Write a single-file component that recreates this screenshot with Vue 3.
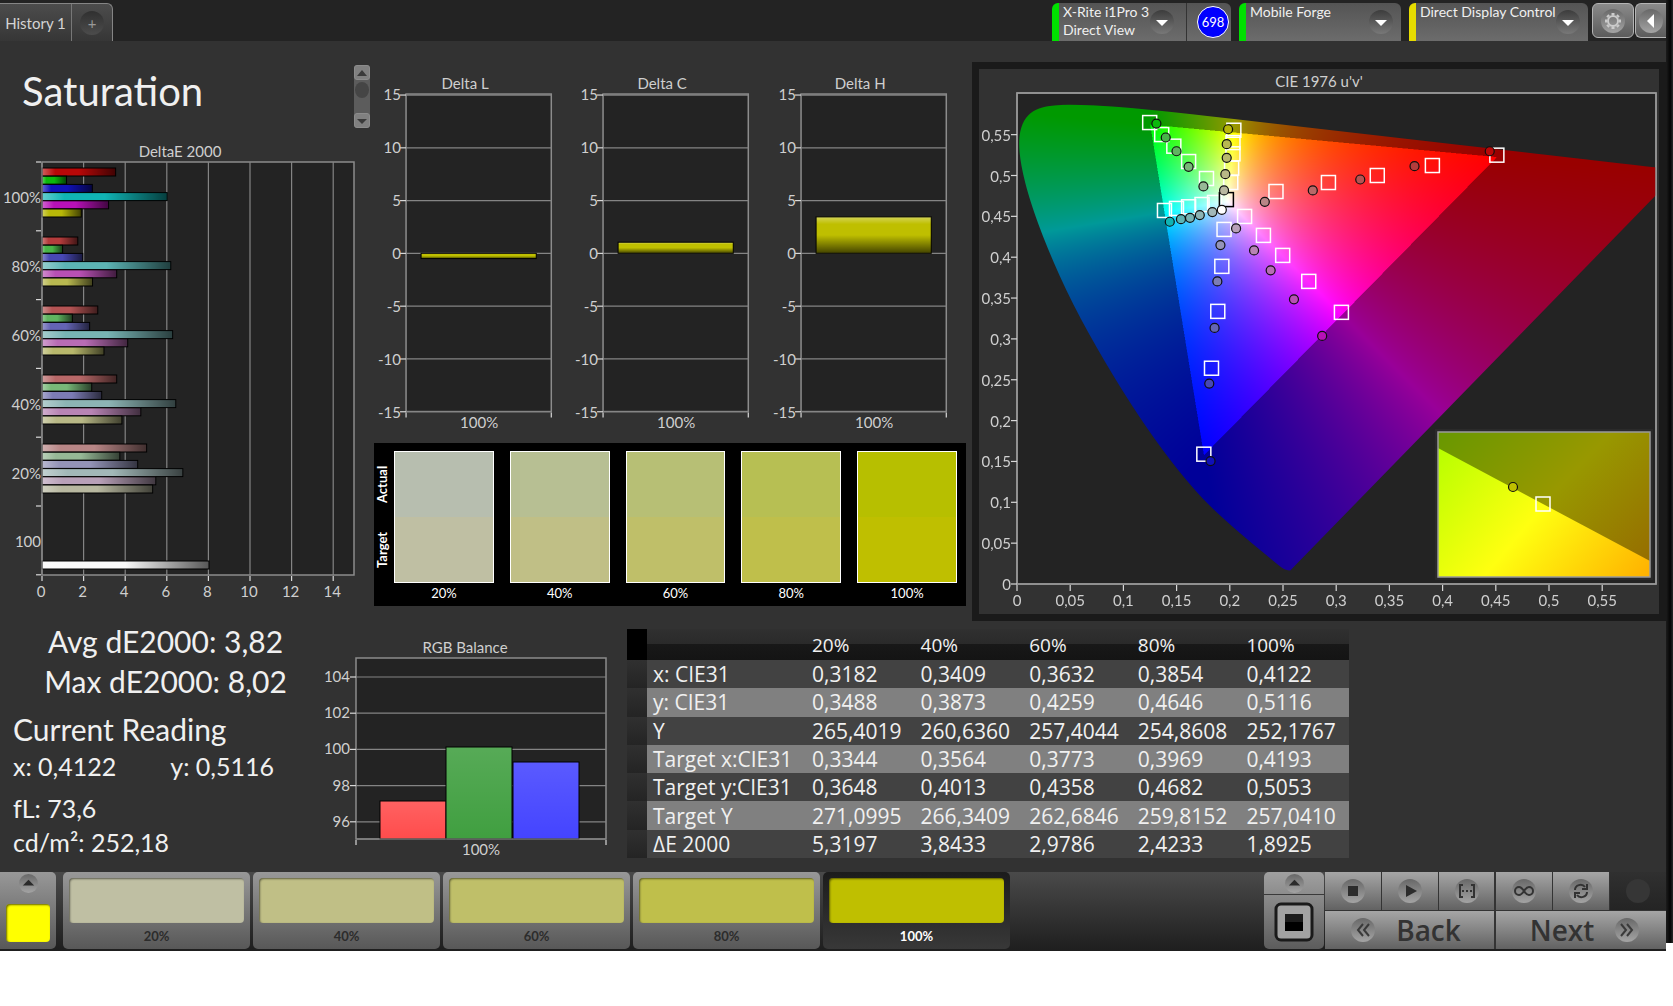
<template>
  <div class="page">
    <div class="app">
      <!-- Top bar: history tabs and connected devices -->
      <header class="topbar">
        <nav class="tabs">
          <button class="tab">History 1</button>
          <button class="tab tab-add" aria-label="Add history">
            <span class="round dark">+</span>
          </button>
        </nav>
        <div class="devices">
          <div v-for="device in devices" :key="device.name" class="device" :class="device.status">
            <button class="device-main" :style="{ width: device.width + 'px' }" aria-haspopup="menu">
              <span class="device-text">
                <span>{{ device.name }}</span>
                <span v-if="device.mode">{{ device.mode }}</span>
              </span>
              <svg class="drop" viewBox="0 0 24 24" aria-hidden="true">
                <circle cx="12" cy="12" r="12" fill="url(#knobDark)" />
                <path d="M6 10h12l-6 6z" fill="#fff" />
              </svg>
            </button>
            <div v-if="device.badge" class="device-badge">
              <span class="badge">{{ device.badge }}</span>
            </div>
          </div>
          <button class="tool" aria-label="Settings">
            <svg viewBox="0 0 24 24" aria-hidden="true">
              <circle cx="12" cy="12" r="12" fill="url(#knob)" />
              <g stroke="#ccc" fill="none">
                <circle cx="12" cy="12" r="5" stroke-width="2" />
                <path v-for="n in 8" :key="n" d="M12 6V4" stroke-width="3" :transform="`rotate(${n * 45} 12 12)`" />
              </g>
            </svg>
          </button>
          <button class="tool tool-last" aria-label="Collapse panel">
            <svg viewBox="0 0 24 24" aria-hidden="true">
              <circle cx="12" cy="12" r="12" fill="url(#knob)" />
              <path d="M15 5v14l-7-7z" fill="#fff" />
            </svg>
          </button>
        </div>
      </header>

      <!-- Shared gradients -->
      <svg class="defs" width="0" height="0" aria-hidden="true">
        <defs>
          <linearGradient id="knob" x1="0" y1="0" x2="0" y2="1">
            <stop offset="0" stop-color="#686868" />
            <stop offset="1" stop-color="#a4a4a4" />
          </linearGradient>
          <linearGradient id="knobDark" x1="0" y1="0" x2="0" y2="1">
            <stop offset="0" stop-color="#3c3c3c" />
            <stop offset="1" stop-color="#787878" />
          </linearGradient>
          <linearGradient id="shadeX">
            <stop offset="0" stop-color="#fff" stop-opacity="0.35" />
            <stop offset="0.18" stop-color="#fff" stop-opacity="0" />
            <stop offset="0.5" stop-color="#000" stop-opacity="0" />
            <stop offset="1" stop-color="#000" stop-opacity="0.65" />
          </linearGradient>
          <linearGradient id="shadeY" x1="0" y1="0" x2="0" y2="1">
            <stop offset="0" stop-color="#fff" stop-opacity="0.35" />
            <stop offset="0.2" stop-color="#fff" stop-opacity="0" />
            <stop offset="0.5" stop-color="#000" stop-opacity="0" />
            <stop offset="1" stop-color="#000" stop-opacity="0.65" />
          </linearGradient>
          <linearGradient id="shadeSoft" x1="0" y1="0" x2="0" y2="1">
            <stop offset="0" stop-color="#fff" stop-opacity="0.12" />
            <stop offset="1" stop-color="#fff" stop-opacity="0" />
          </linearGradient>
        </defs>
      </svg>

      <main>
        <section class="upper">
          <div class="col-left">
            <div class="title-row">
              <h1>Saturation</h1>
              <div class="scroller">
                <button aria-label="Scroll up"><svg viewBox="0 0 12 12"><path d="M1 9h10L6 3z" /></svg></button>
                <span class="thumb"></span>
                <button aria-label="Scroll down"><svg viewBox="0 0 12 12"><path d="M1 4h10L6 9z" /></svg></button>
              </div>
            </div>

            <svg class="chart" viewBox="0 0 370 474" role="img" aria-label="DeltaE 2000">
              <text x="180" y="21" class="mid">DeltaE 2000</text>
              <rect x="42" y="26" width="312" height="413" class="plot" />
              <g v-for="n in 7" :key="n">
                <path :d="`M${42 + n * 41.6} 26V439`" class="grid" />
              </g>
              <g v-for="n in 8" :key="'x' + n">
                <path :d="`M${42 + (n - 1) * 41.6} 440v5`" class="tick" />
                <text :x="41 + (n - 1) * 41.6" y="461" class="mid">{{ (n - 1) * 2 }}</text>
              </g>
              <path v-for="n in 7" :key="'y' + n" :d="`M36 ${26 + (n - 1) * 68.8}h5`" class="tick" />
              <g v-for="(group, g) in deltaE" :key="group.label">
                <text x="41" :y="67 + g * 69" class="end">{{ group.label }}</text>
                <g v-for="(value, i) in group.values" :key="i">
                  <rect x="42" :y="32 + g * 69 + i * 8.2" :width="value * 20.8" height="8" :fill="group.colors[i]" />
                  <rect x="42" :y="32 + g * 69 + i * 8.2" :width="value * 20.8" height="8" fill="url(#shadeX)" class="bar" />
                </g>
              </g>
              <text x="41" y="411" class="end">100</text>
              <rect x="42" y="425" width="167" height="8" fill="#f8f8f8" />
              <rect x="42" y="425" width="167" height="8" fill="url(#shadeX)" class="bar" />
              <path d="M42 26V439" class="axis" />
            </svg>
          </div>

          <div class="col-mid">
            <div class="deltas">
              <svg v-for="chart in deltas" :key="chart.title" class="chart" viewBox="0 0 197 365" role="img" :aria-label="chart.title">
                <text x="91" y="19" class="mid">{{ chart.title }}</text>
                <rect x="32" y="24" width="145" height="317" class="plot" />
                <g v-for="(tick, i) in [15, 10, 5, 0, -5, -10, -15]" :key="tick">
                  <path :d="`M32 ${25 + i * 52.7}h145`" class="grid" />
                  <path :d="`M26 ${25 + i * 52.7}h6`" class="tick" />
                  <text x="27" :y="30 + i * 52.9" class="end">{{ tick }}</text>
                </g>
                <path d="M32 342v5M177 342v5" class="tick" />
                <rect x="47" :y="barTop(chart.value)" width="115" :height="Math.abs(chart.value) * 10.54" fill="#bfbf00" />
                <rect x="47" :y="barTop(chart.value)" width="115" :height="Math.abs(chart.value) * 10.54" fill="url(#shadeY)" class="bar" />
                <text x="105" y="357" class="mid">100%</text>
              </svg>
            </div>

            <div class="compare">
              <div class="compare-side">
                <span>Actual</span>
                <span>Target</span>
              </div>
              <figure v-for="patch in patches" :key="patch.label">
                <div class="compare-box">
                  <div :style="{ background: patch.actual }"></div>
                  <div :style="{ background: patch.target }"></div>
                </div>
                <figcaption>{{ patch.label }}</figcaption>
              </figure>
            </div>
          </div>

          <div class="cie">
            <svg class="chart" viewBox="0 0 680 545" role="img" aria-label="CIE 1976 u'v'">
              <text x="340" y="18" class="mid">CIE 1976 u'v'</text>
              <rect x="38" y="24" width="639" height="491" class="plot" />
              <foreignObject x="38" y="24" width="639" height="491">
                <canvas ref="gamut" class="gamut" width="1278" height="982"></canvas>
              </foreignObject>
              <rect x="38" y="24" width="639" height="491" class="frame" />
              <g v-for="n in 12" :key="n">
                <path :d="`M${px((n - 1) * 0.05)} 516v6`" class="tick" />
                <text :x="px((n - 1) * 0.05)" y="537" class="mid">{{ comma((n - 1) * 0.05) }}</text>
                <path :d="`M32 ${py((n - 1) * 0.05)}h6`" class="tick" />
                <text x="32" :y="py((n - 1) * 0.05) + 6" class="end">{{ comma((n - 1) * 0.05) }}</text>
              </g>

              <g v-for="(set, s) in targets" :key="'t' + s">
                <rect v-for="(p, i) in set" :key="i" :x="px(p[0]) - 7" :y="py(p[1]) - 7" width="14" height="14" class="target" />
              </g>
              <rect :x="px(0.1968) - 7" :y="py(0.4705) - 7" width="14" height="14" class="target white-point" />
              <g v-for="(set, s) in actuals" :key="'a' + s">
                <circle v-for="(p, i) in set" :key="i" :cx="px(p[0])" :cy="py(p[1])" r="4.5" :fill="palette[i][s]" class="actual" />
              </g>
              <circle :cx="px(0.1925)" :cy="py(0.458)" r="4.5" fill="#fff" class="actual" />

              <!-- Magnified view around the current patch -->
              <defs>
                <linearGradient id="insetIn" gradientUnits="userSpaceOnUse" x1="477" y1="360" x2="662" y2="518">
                  <stop offset="0" stop-color="#b8ff00" />
                  <stop offset="0.48" stop-color="#ffff10" />
                  <stop offset="1" stop-color="#ffb000" />
                </linearGradient>
                <linearGradient id="insetOut" gradientUnits="userSpaceOnUse" x1="474" y1="349" x2="648" y2="514">
                  <stop offset="0" stop-color="#689800" />
                  <stop offset="0.52" stop-color="#989800" />
                  <stop offset="1" stop-color="#966e00" />
                </linearGradient>
              </defs>
              <rect x="456" y="360" width="218" height="151" fill="#2a2a2a" />
              <rect x="459" y="363" width="212" height="145" fill="url(#insetOut)" />
              <path d="M459 379L671 492V508H459z" fill="url(#insetIn)" />
              <rect x="459" y="363" width="212" height="145" class="frame" />
              <rect x="557" y="428" width="14" height="14" class="target" />
              <circle cx="534" cy="418" r="4.5" fill="#bfbf00" class="actual" />
            </svg>
          </div>
        </section>

        <section class="lower">
          <div class="stats">
            <p class="big center">Avg dE2000: 3,82</p>
            <p class="big center">Max dE2000: 8,02</p>
            <h2 class="big">Current Reading</h2>
            <p class="reading"><span>x: 0,4122</span><span>y: 0,5116</span></p>
            <p class="reading spaced">fL: 73,6</p>
            <p class="reading">cd/m²: 252,18</p>
          </div>

          <svg class="chart rgb" viewBox="0 0 307 230" role="img" aria-label="RGB Balance">
            <text x="145" y="18" class="mid">RGB Balance</text>
            <rect x="36" y="23" width="250" height="181" class="plot" />
            <g v-for="n in 5" :key="n">
              <path :d="`M36 ${42 + (n - 1) * 36.2}h250`" class="grid" />
              <path :d="`M30 ${42 + (n - 1) * 36.2}h6`" class="tick" />
              <text x="30" :y="47 + (n - 1) * 36.2" class="end">{{ 106 - n * 2 }}</text>
            </g>
            <g v-for="bar in balance" :key="bar.color">
              <rect :x="bar.x" :y="bar.y" width="66" :height="204 - bar.y" :fill="bar.color" />
              <rect :x="bar.x" :y="bar.y" width="66" :height="204 - bar.y" fill="url(#shadeSoft)" class="bar" />
            </g>
            <path d="M36 204h250" class="axis" />
            <path d="M36 205v5M286 205v5" class="tick" />
            <text x="161" y="220" class="mid">100%</text>
          </svg>

          <table>
            <thead>
              <tr>
                <th class="handle"></th>
                <th class="name"></th>
                <th v-for="patch in patches" :key="patch.label" scope="col">{{ patch.label }}</th>
              </tr>
            </thead>
            <tbody>
              <tr v-for="row in rows" :key="row[0]">
                <td class="handle"></td>
                <td v-for="(cell, i) in row" :key="i">{{ cell }}</td>
              </tr>
            </tbody>
          </table>
        </section>
      </main>

      <!-- Patch strip and measurement controls -->
      <footer class="bottombar">
        <button class="current" aria-label="Current patch">
          <svg viewBox="0 0 20 20"><circle cx="10" cy="10" r="10" fill="url(#knob)" /><path d="M4 12h12l-6-6z" fill="#2a2a2a" /></svg>
          <span class="current-color"></span>
        </button>
        <div class="strip">
          <button v-for="patch in patches" :key="patch.label" class="patch" :class="{ active: patch.label === selected }" @click="selected = patch.label">
            <span class="patch-color" :style="{ background: patch.target }"></span>
            <span class="patch-label">{{ patch.label }}</span>
          </button>
        </div>
        <div class="window-box">
          <button class="box-up" aria-label="Show patterns">
            <svg viewBox="0 0 20 20"><circle cx="10" cy="10" r="10" fill="url(#knob)" /><path d="M4 12h12l-6-6z" fill="#2a2a2a" /></svg>
          </button>
          <button class="box-main" aria-label="Pattern window">
            <svg viewBox="0 0 40 40">
              <rect x="2" y="2" width="36" height="36" rx="5" fill="#a2a2a2" stroke="#1a1a1a" stroke-width="3" />
              <rect x="11" y="12" width="18" height="17" fill="#000" />
              <path d="M11 12h18v8H11z" fill="#1c1c1c" />
            </svg>
          </button>
        </div>
        <div class="controls">
          <button v-for="icon in icons" :key="icon.name" class="control" :class="{ split: icon.name === 'Range' }" :aria-label="icon.name">
            <svg viewBox="0 0 26 26">
              <circle cx="13" cy="13" r="12" fill="url(#knob)" />
              <path :d="icon.path" :fill="icon.fill ? '#2c2c2c' : 'none'" :stroke="icon.fill ? 'none' : '#333'" stroke-width="2" />
            </svg>
          </button>
          <button class="control off" disabled aria-label="Record">
            <svg viewBox="0 0 26 26"><circle cx="13" cy="13" r="12" fill="#363636" /></svg>
          </button>
          <button class="step back split">
            <svg viewBox="0 0 26 26">
              <circle cx="13" cy="13" r="12" fill="url(#knob)" />
              <path d="M13 7l-5 6 5 6M19 7l-5 6 5 6" fill="none" stroke="#3a3a3a" stroke-width="2" />
            </svg>
            <span>Back</span>
          </button>
          <button class="step next">
            <span>Next</span>
            <svg viewBox="0 0 26 26">
              <circle cx="13" cy="13" r="12" fill="url(#knob)" />
              <path d="M7 7l5 6-5 6M13 7l5 6-5 6" fill="none" stroke="#3a3a3a" stroke-width="2" />
            </svg>
          </button>
        </div>
      </footer>
    </div>
    <div class="edge"></div>
  </div>
</template>

<script setup>
import { ref, onMounted } from 'vue'

const selected = ref('100%')
const gamut = ref(null)

const devices = [
  { name: 'X-Rite i1Pro 3', mode: 'Direct View', status: 'ok', badge: '698', width: 127 },
  { name: 'Mobile Forge', status: 'ok', width: 155 },
  { name: 'Direct Display Control', status: 'warn', width: 172 }
]

const patches = [
  { label: '20%', actual: '#b7beaf', target: '#bfbfa3' },
  { label: '40%', actual: '#b7bf93', target: '#c0bf86' },
  { label: '60%', actual: '#b7bf75', target: '#bfbf69' },
  { label: '80%', actual: '#b7bf53', target: '#bfbf4b' },
  { label: '100%', actual: '#b7bf00', target: '#bfbf00' }
]

// red, green, blue, cyan, magenta, yellow for 100% down to 20%
const palette = [
  ['#b80808', '#0cb80c', '#1010b8', '#10b4b4', '#b810b8', '#b8b808'],
  ['#b43c3c', '#48b448', '#4848b4', '#5cb4b4', '#b850b4', '#b8b850'],
  ['#b45454', '#60b460', '#6464b4', '#78b4b4', '#b86cb4', '#b8b86c'],
  ['#b86868', '#78b878', '#7c7cb4', '#8cb4b4', '#b884b4', '#b8b886'],
  ['#b88686', '#96b896', '#9494b8', '#a2b8b8', '#b8a0b8', '#b8b8a0']
]

const deltaE = [
  { label: '100%', values: [3.54, 1.18, 2.42, 6.02, 3.2, 1.89] },
  { label: '80%', values: [1.72, 0.99, 1.96, 6.19, 3.59, 2.43] },
  { label: '60%', values: [2.68, 1.46, 2.29, 6.28, 4.12, 2.98] },
  { label: '40%', values: [3.59, 2.39, 2.87, 6.43, 4.75, 3.84] },
  { label: '20%', values: [5.03, 3.74, 4.6, 6.77, 5.47, 5.32] }
].map((group, i) => ({ ...group, colors: palette[i] }))

const deltas = [
  { title: 'Delta L', value: -0.5 },
  { title: 'Delta C', value: 1.05 },
  { title: 'Delta H', value: 3.45 }
]

const balance = [
  { color: '#ff4c4c', x: 60, y: 166 },
  { color: '#409f40', x: 126, y: 112 },
  { color: '#4444ff', x: 193, y: 127 }
]

const rows = [
  ['x: CIE31', '0,3182', '0,3409', '0,3632', '0,3854', '0,4122'],
  ['y: CIE31', '0,3488', '0,3873', '0,4259', '0,4646', '0,5116'],
  ['Y', '265,4019', '260,6360', '257,4044', '254,8608', '252,1767'],
  ['Target x:CIE31', '0,3344', '0,3564', '0,3773', '0,3969', '0,4193'],
  ['Target y:CIE31', '0,3648', '0,4013', '0,4358', '0,4682', '0,5053'],
  ['Target Y', '271,0995', '266,3409', '262,6846', '259,8152', '257,0410'],
  ['ΔE 2000', '5,3197', '3,8433', '2,9786', '2,4233', '1,8925']
]

// u'v' coordinates, same colour order as the palette, 100% first
const targets = [
  [[0.451, 0.5249], [0.3904, 0.5122], [0.3386, 0.5], [0.2927, 0.4914], [0.2434, 0.4804]],
  [[0.1247, 0.5648], [0.136, 0.5501], [0.1474, 0.5359], [0.1613, 0.5171], [0.1781, 0.4963]],
  [[0.1756, 0.1589], [0.1828, 0.2641], [0.1887, 0.3337], [0.1925, 0.3888], [0.1946, 0.434]],
  [[0.1386, 0.4572], [0.1499, 0.4597], [0.1613, 0.4617], [0.1739, 0.4645], [0.1857, 0.467]],
  [[0.3049, 0.3325], [0.2742, 0.3704], [0.2497, 0.4022], [0.2316, 0.4267], [0.2139, 0.4499]],
  [[0.2038, 0.5554], [0.203, 0.5403], [0.203, 0.5265], [0.2017, 0.509], [0.2009, 0.4914]]
]

const actuals = [
  [[0.4443, 0.5297], [0.3736, 0.5114], [0.3226, 0.4951], [0.278, 0.4817], [0.2329, 0.4678]],
  [[0.131, 0.5636], [0.1398, 0.5465], [0.1499, 0.5297], [0.1613, 0.5106], [0.1752, 0.4866]],
  [[0.1819, 0.1504], [0.1807, 0.2453], [0.1857, 0.3134], [0.1883, 0.3704], [0.1912, 0.4148]],
  [[0.1436, 0.4434], [0.1541, 0.4466], [0.1626, 0.4482], [0.1718, 0.4515], [0.1836, 0.4552]],
  [[0.2868, 0.3036], [0.2603, 0.3484], [0.2384, 0.3839], [0.2228, 0.4083], [0.2059, 0.4352]],
  [[0.1984, 0.5566], [0.1971, 0.5383], [0.1971, 0.5216], [0.1958, 0.5016], [0.1946, 0.4817]]
]

const icons = [
  { name: 'Stop', fill: true, path: 'M8 8h10v10H8z' },
  { name: 'Play', fill: true, path: 'M9 7l11 6-11 6z' },
  { name: 'Range', fill: false, path: 'M9 7H6v12h3M17 7h3v12h-3M8 13h2M12 13h2M16 13h2' },
  { name: 'Continuous', fill: false, path: 'M13 13c-2-3-3-4-5-4a4 4 0 0 0 0 8c2 0 3-1 5-4s3-4 5-4a4 4 0 0 1 0 8c-2 0-3-1-5-4z' },
  { name: 'Repeat', fill: false, path: 'M7 12c0-5 7-7 10-3M19 6v5h-5M19 14c0 5-7 7-10 3M7 20v-5h5' }
]

// CIE 1931 spectral locus (x, y)
const locus = [
  [0.1741, 0.005], [0.1714, 0.0051], [0.1689, 0.0069], [0.1644, 0.0109], [0.1566, 0.0177],
  [0.144, 0.0297], [0.1355, 0.0399], [0.1241, 0.0578], [0.1096, 0.0868], [0.0913, 0.1327],
  [0.0687, 0.2007], [0.0454, 0.295], [0.0235, 0.4127], [0.0082, 0.5384], [0.0039, 0.6548],
  [0.0139, 0.7502], [0.0389, 0.812], [0.0743, 0.8338], [0.1142, 0.8262], [0.1547, 0.8059],
  [0.2296, 0.7543], [0.3016, 0.6923], [0.3731, 0.6245], [0.4441, 0.5547], [0.5125, 0.4866],
  [0.5752, 0.4242], [0.627, 0.3725], [0.6658, 0.334], [0.6915, 0.3083], [0.719, 0.2809], [0.7347, 0.2653]
]

function px(u) {
  return 38 + u * 1064
}

function py(v) {
  return 515 - v * 817
}

function comma(n) {
  return String(Number(n.toFixed(2))).replace('.', ',')
}

function barTop(value) {
  return 183 - Math.max(value, 0) * 10.54
}

function drawGamut() {
  const canvas = gamut.value
  const ctx = canvas.getContext('2d')
  const { width, height } = canvas
  const image = ctx.createImageData(width, height)
  for (let row = 0; row < height; row++) {
    const v = (height - row) / 2 / 817
    for (let col = 0; col < width; col++) {
      const u = col / 2 / 1064
      const d = 6 * u - 16 * v + 12
      const x = (9 * u) / d
      const y = Math.max((4 * v) / d, 0.0001)
      const X = x / y
      const Z = (1 - x - y) / y
      let r = 3.2406 * X - 1.5372 - 0.4986 * Z
      let g = -0.9689 * X + 1.8758 + 0.0415 * Z
      let b = 0.0557 * X - 0.204 + 1.057 * Z
      // colours outside Rec.709 are drawn darker
      const level = Math.min(r, g, b) < 0 ? 153 : 255
      r = Math.max(r, 0)
      g = Math.max(g, 0)
      b = Math.max(b, 0)
      const max = Math.max(r, g, b)
      const at = (row * width + col) * 4
      image.data[at] = (r / max) * level
      image.data[at + 1] = (g / max) * level
      image.data[at + 2] = (b / max) * level
      image.data[at + 3] = 255
    }
  }
  ctx.putImageData(image, 0, 0)

  // keep only the visible horseshoe
  const points = locus.map(([x, y]) => {
    const d = -2 * x + 12 * y + 3
    return [((4 * x) / d) * 1064 * 2, height - ((9 * y) / d) * 817 * 2]
  })
  ctx.globalCompositeOperation = 'destination-in'
  ctx.beginPath()
  ctx.moveTo(...points[0])
  for (let i = 1; i < points.length - 1; i++) {
    const [ax, ay] = points[i]
    const [bx, by] = points[i + 1]
    ctx.quadraticCurveTo(ax, ay, (ax + bx) / 2, (ay + by) / 2)
  }
  ctx.lineTo(...points[points.length - 1])
  ctx.closePath()
  ctx.fill()
}

onMounted(drawGamut)
</script>

<style>
body {
  margin: 0;
  background: #fff;
}
</style>

<style scoped>
.page {
  display: flex;
  font-family: Lato, "Liberation Sans", sans-serif;
  font-size: 14px;
  color: #d4d4d4;
}

.app {
  flex: 1;
  min-width: 0;
  background: #323232;
}

.edge {
  width: 7px;
  margin-bottom: 8px;
  background: linear-gradient(90deg, #1c1c1c, #050505 60%, #2a2a2a);
}

.defs {
  display: block;
}

button {
  font: inherit;
  color: inherit;
  border: none;
  padding: 0;
  margin: 0;
  background: none;
  cursor: pointer;
}

h1,
h2,
p,
figure {
  margin: 0;
  font-weight: 400;
}

/* Top bar */
.topbar {
  display: flex;
  justify-content: space-between;
  align-items: flex-end;
  height: 41px;
  background: #232323;
}

.tabs {
  display: flex;
  height: 38px;
  border: 1px solid #858585;
  border-width: 1px 1px 0 0;
  border-radius: 0 6px 0 0;
  box-sizing: border-box;
  background: linear-gradient(#4c4c4c, #363636);
}

.tab {
  width: 71px;
  font-size: 15px;
  white-space: nowrap;
}

.tab-add {
  width: 41px;
  border-left: 1px solid #777;
  display: flex;
  align-items: center;
  justify-content: center;
}

.round {
  width: 24px;
  height: 24px;
  line-height: 24px;
  border-radius: 50%;
  background: linear-gradient(#303030, #4c4c4c);
  color: #999;
}

.devices {
  display: flex;
  height: 38px;
}

.device {
  display: flex;
  margin-right: 8px;
  border-left: 7px solid #00e000;
  border-radius: 6px 6px 0 0;
  background: linear-gradient(#545454, #6c6c6c);
  box-sizing: border-box;
  color: #f0f0f0;
}

.device.warn {
  border-left-color: #e6dc00;
  margin-right: 4px;
}

.device-main {
  display: flex;
  justify-content: space-between;
  align-items: flex-start;
  box-sizing: border-box;
  padding: 0 8px 0 4px;
}

.device:first-child .device-main {
  padding-right: 12px;
}

.device-text {
  display: flex;
  flex-direction: column;
  line-height: 18px;
  text-align: left;
  white-space: nowrap;
}

.drop {
  flex: none;
  width: 24px;
  height: 24px;
  margin-top: 7px;
}

.device-badge {
  display: flex;
  align-items: center;
  width: 34px;
  padding-left: 10px;
  border-left: 1px solid #333;
}

.badge {
  width: 30px;
  height: 30px;
  line-height: 30px;
  border: 1px solid #fff;
  border-radius: 50%;
  background: #0000ff;
  color: #fff;
  font-size: 13px;
  text-align: center;
}

.tool {
  width: 42px;
  height: 35px;
  border: 1px solid #b4b4b4;
  border-radius: 6px;
  background: linear-gradient(#8a8a8a, #5c5c5c);
  display: flex;
  align-items: center;
  justify-content: center;
  margin-right: 1px;
}

.tool svg {
  width: 24px;
  height: 24px;
}

.tool-last {
  width: 31px;
  margin-right: 0;
  border-right: none;
  border-radius: 6px 0 0 6px;
}

/* Charts */
.chart {
  display: block;
  width: 100%;
  font-size: 15px;
  fill: #cfcfcf;
}

.mid {
  text-anchor: middle;
}

.end {
  text-anchor: end;
}

.plot {
  fill: #232323;
  stroke: #8c8c8c;
  stroke-width: 1.5;
}

.frame {
  fill: none;
  stroke: #9a9a9a;
  stroke-width: 1.5;
}

.grid,
.axis,
.tick {
  fill: none;
  stroke: #848484;
  stroke-width: 1.2;
}

.tick {
  stroke: #d8d8d8;
}

.bar {
  stroke: #000;
  stroke-width: 1;
}

.target {
  fill: none;
  stroke: #fff;
  stroke-width: 1.5;
}

.white-point {
  stroke: #000;
}

.actual {
  stroke: #101010;
  stroke-width: 1.2;
}

.gamut {
  display: block;
  width: 639px;
  height: 491px;
}

/* Upper area */
.upper {
  display: grid;
  grid-template-columns: 370fr 602fr 694fr;
  align-items: start;
}

.title-row {
  display: flex;
  justify-content: space-between;
  align-items: center;
  padding: 24px 0 8px 22px;
}

h1 {
  font-size: 40px;
  line-height: 40px;
  padding-bottom: 12px;
  color: #f0f0f0;
}

.scroller {
  display: flex;
  flex-direction: column;
  width: 16px;
  height: 63px;
  border-radius: 3px;
  background: #5c5c5c;
}

.scroller button {
  height: 15px;
  border: 1px solid #8c8c8c;
  border-radius: 3px;
  background: #808080;
  display: flex;
  align-items: center;
  justify-content: center;
}

.scroller svg {
  width: 12px;
  height: 12px;
  fill: #3a3a3a;
}

.thumb {
  width: 14px;
  height: 16px;
  margin: 2px 1px auto;
  border-radius: 50%;
  background: #454545;
}

.col-mid {
  padding: 29px 6px 0 4px;
}

.deltas {
  display: grid;
  grid-template-columns: repeat(3, 1fr);
}

.compare {
  display: grid;
  grid-template-columns: 4px repeat(5, 1fr);
  gap: 16px;
  margin-top: 7px;
  padding: 8px 9px 3px 0;
  background: #000;
  color: #fff;
}

.compare-side {
  display: flex;
  flex-direction: column;
  height: 132px;
  width: 20px;
}

.compare-side span {
  flex: 1;
  writing-mode: vertical-rl;
  transform: rotate(180deg);
  text-align: center;
  line-height: 16px;
  font-size: 13px;
  font-weight: 700;
}

.compare-box {
  display: flex;
  flex-direction: column;
  height: 130px;
  border: 1px solid #fff;
}

.compare-box div {
  flex: 1;
}

.compare figcaption {
  line-height: 20px;
  text-align: center;
  font-size: 13px;
}

.cie {
  margin-top: 21px;
  border: 7px solid #1a1a1a;
}

/* Lower area */
.lower {
  display: grid;
  grid-template-columns: 320fr 307fr 722fr 317fr;
  align-items: start;
  padding-bottom: 7px;
}

.stats {
  padding: 0 0 0 13px;
  color: #f0f0f0;
}

.big {
  font-size: 30px;
  line-height: 40px;
}

.center {
  text-align: center;
  padding-right: 2px;
}

h2.big {
  margin-top: 8px;
}

.reading {
  display: flex;
  gap: 54px;
  font-size: 25px;
  line-height: 34px;
}

.spaced {
  margin-top: 8px;
}

.rgb {
  margin-top: 14px;
}

table {
  width: 100%;
  height: 229px;
  margin-top: 8px;
  table-layout: fixed;
  border-collapse: collapse;
  font-family: "Open Sans", "Noto Sans", sans-serif;
  font-size: 21px;
  color: #f0f0f0;
}

th,
td {
  padding: 0 0 0 6px;
  line-height: 28px;
  text-align: left;
  font-weight: 400;
  white-space: nowrap;
}

thead th {
  height: 31px;
  font-size: 19px;
  background: linear-gradient(#303030 0, #2a2a2a 50%, #181818 50%, #141414 100%);
}

th.handle {
  width: 14px;
  background: #000;
}

th.name {
  width: 153px;
}

tbody tr {
  background: #424242;
}

tbody tr:nth-child(even) {
  background: #808080;
}

td.handle {
  background: linear-gradient(#303030, #242424);
}

/* Bottom bar */
.bottombar {
  display: flex;
  height: 79px;
  padding-bottom: 2px;
  box-sizing: border-box;
  background: linear-gradient(#4a4a4a, #1e1e1e);
}

.current {
  display: flex;
  flex-direction: column;
  align-items: center;
  width: 56px;
  border-radius: 0 5px 5px 0;
  background: linear-gradient(#989898, #585858);
}

.current svg,
.box-up svg {
  width: 19px;
  height: 19px;
  margin-top: 2px;
}

.current-color {
  width: 44px;
  height: 38px;
  margin-top: 11px;
  border-radius: 4px;
  background: #ffff00;
  box-shadow: inset 1px 1px 2px rgba(0, 0, 0, 0.6);
}

.strip {
  flex: 1;
  display: flex;
  gap: 3px;
  padding-left: 7px;
  min-width: 0;
}

.patch {
  flex: 0 1 187px;
  display: flex;
  flex-direction: column;
  padding: 6px 6px 0;
  border-radius: 5px;
  background: linear-gradient(#989898, #585858);
  color: #2c2c2c;
  font-size: 13px;
  font-weight: 700;
}

.patch.active {
  background: linear-gradient(#1c1c1c, #383838);
  color: #fff;
}

.patch-color {
  height: 45px;
  width: 100%;
  border-radius: 4px;
  box-shadow: inset 1px 1px 2px rgba(0, 0, 0, 0.5);
}

.patch-label {
  width: 100%;
  line-height: 26px;
}

.window-box {
  width: 60px;
  margin-right: 1px;
  display: flex;
  flex-direction: column;
  border-radius: 5px;
  overflow: hidden;
  background: linear-gradient(#a0a0a0, #5c5c5c);
}

.box-up {
  height: 23px;
  border-bottom: 1px solid #3a3a3a;
}

.box-main {
  flex: 1;
  display: flex;
  align-items: center;
  justify-content: center;
}

.box-main svg {
  width: 40px;
  height: 40px;
}

.controls {
  display: grid;
  grid-template-columns: repeat(6, 1fr);
  grid-template-rows: 1fr 1fr;
  gap: 1px;
  width: 341px;
  background: #343434;
}

.control,
.step {
  display: flex;
  align-items: center;
  justify-content: center;
  background: linear-gradient(#a6a6a6, #626262);
}

.split {
  margin-right: 1px;
}

.control svg,
.step svg {
  width: 26px;
  height: 26px;
}

.control.off {
  background: linear-gradient(#303030, #242424);
}

.step {
  grid-column: span 3;
  gap: 20px;
  font-family: "Open Sans", "Noto Sans", sans-serif;
  font-size: 28px;
  font-weight: 600;
  line-height: 36px;
  color: #333;
}

.step.back {
  padding-right: 8px;
}

.step.next {
  padding-left: 8px;
}
</style>
